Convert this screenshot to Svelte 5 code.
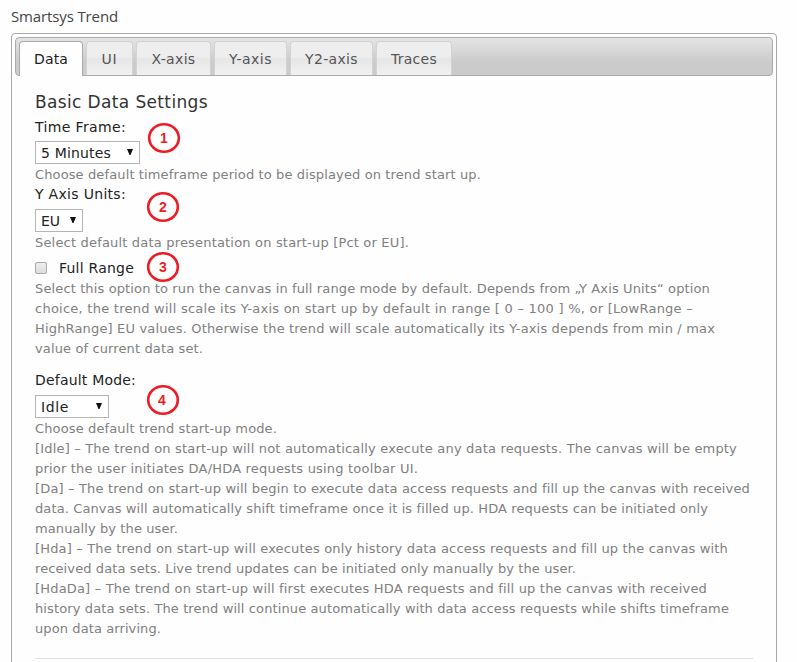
<script>
  const tabs = [
    { label: 'Data', width: 64, text: 34 },
    { label: 'UI', width: 47, text: 16 },
    { label: 'X-axis', width: 75, text: 44 },
    { label: 'Y-axis', width: 73, text: 43 },
    { label: 'Y2-axis', width: 83, text: 53 },
    { label: 'Traces', width: 76, text: 46 }
  ];
  const rangeHelp = [
    ['Select this option to run the canvas in full range mode by default. Depends from „Y Axis Units“ option', 675],
    ['choice, the trend will scale its Y-axis on start up by default in range [ 0 – 100 ] %, or [LowRange –', 658],
    ['HighRange] EU values. Otherwise the trend will scale automatically its Y-axis depends from min / max', 680],
    ['value of current data set.', 168]
  ];
  const modeHelp = [
    ['Choose default trend start-up mode.', 242],
    ['[Idle] – The trend on start-up will not automatically execute any data requests. The canvas will be empty', 702],
    ['prior the user initiates DA/HDA requests using toolbar UI.', 383],
    ['[Da] – The trend on start-up will begin to execute data access requests and fill up the canvas with received', 715],
    ['data. Canvas will automatically shift timeframe once it is filled up. HDA requests can be initiated only', 673],
    ['manually by the user.', 143],
    ['[Hda] – The trend on start-up will executes only history data access requests and fill up the canvas with', 693],
    ['received data sets. Live trend updates can be initiated only manually by the user.', 541],
    ['[HdaDa] – The trend on start-up will first executes HDA requests and fill up the canvas with received', 672],
    ['history data sets. The trend will continue automatically with data access requests while shifts timeframe', 694],
    ['upon data arriving.', 126]
  ];

  // Tracks a single line of text so that it fills the given width.
  function fit(node, width) {
    node.style.letterSpacing = '0';
    const natural = node.getBoundingClientRect().width;
    node.style.letterSpacing = `${(width - natural) / node.textContent.length}px`;
  }
</script>

{#snippet badge(n, x, y)}
  <svg class="badge" style:left="{x}px" style:top="{y}px" width="34" height="32" viewBox="0 0 34 32">
    <ellipse cx="17" cy="16" rx="14.8" ry="13.8" fill="#fff" stroke="#ed1c24" stroke-width="2.6" />
    <text x={n === 4 ? 16 : 17} y="21" text-anchor="middle">{n}</text>
  </svg>
{/snippet}

{#snippet select(label, width, text)}
  <button class="select" style:width="{width}px">
    <span use:fit={text}>{label}</span>
    <svg width="6" height="6" viewBox="0 0 6 6"><path d="M0 0h6L3.5 6h-1z" fill="#111" /></svg>
  </button>
{/snippet}

{#snippet help(lines)}
  <div class="help">
    {#each lines as [text, width]}
      <div><span use:fit={width}>{text}</span></div>
    {/each}
  </div>
{/snippet}

<main>
  <div class="title"><span use:fit={107}>Smartsys Trend</span></div>
  <section class="panel">
    <nav>
      {#each tabs as tab, i}
        <div class="tab" class:active={i === 0} style:width="{tab.width}px">
          <span use:fit={tab.text}>{tab.label}</span>
        </div>
      {/each}
    </nav>
    <div class="content">
      <h2><span use:fit={173}>Basic Data Settings</span></h2>
      <div class="label"><span use:fit={91}>Time Frame:</span></div>
      {@render select('5 Minutes', 105, 70)}
      {@render help([['Choose default timeframe period to be displayed on trend start up.', 446]])}
      <div class="label units"><span use:fit={91}>Y Axis Units:</span></div>
      {@render select('EU', 48, 19)}
      {@render help([['Select default data presentation on start-up [Pct or EU].', 374]])}
      <div class="check"><i></i><span use:fit={75}>Full Range</span></div>
      {@render help(rangeHelp)}
      <div class="label mode"><span use:fit={101}>Default Mode:</span></div>
      {@render select('Idle', 74, 28)}
      {@render help(modeHelp)}
      <hr />
    </div>
  </section>
  {@render badge(1, 147, 122)}
  {@render badge(2, 146, 191)}
  {@render badge(3, 146, 251)}
  {@render badge(4, 146, 384)}
</main>

<style>
  :global(body) { background: #fff; }
  main {
    position: relative;
    width: 797px;
    height: 662px;
    overflow: hidden;
    box-sizing: border-box;
    padding-left: 11px;
    background: #fefefe;
    font-family: Verdana, "DejaVu Sans", sans-serif;
    color: #222;
  }
  span { white-space: pre; }
  .title {
    height: 33px;
    line-height: 33px;
    font-family: "Open Sans", "Noto Sans", sans-serif;
    font-size: 15px;
    color: #444;
  }
  .panel {
    box-sizing: border-box;
    width: 766px;
    height: 660px;
    padding: 3px;
    border: 1px solid #a8a8a8;
    border-radius: 4px;
  }
  nav {
    box-sizing: border-box;
    display: flex;
    gap: 3px;
    width: 758px;
    height: 39px;
    padding: 3px 3px 0;
    border: 1px solid #aaa;
    border-radius: 4px;
    background: linear-gradient(#e4e4e4, #cbcbcb 65%, #cbcbcb);
  }
  .tab {
    box-sizing: border-box;
    flex: none;
    height: 34px;
    border: 1px solid #d3d3d3;
    border-bottom: 0;
    border-radius: 4px 4px 0 0;
    background: linear-gradient(#eee 0, #ededed 49%, #e6e6e6 50%, #f1f1f1);
    color: #555;
    font-size: 14px;
    line-height: 34px;
    text-align: center;
  }
  .tab.active {
    height: 35px;
    border-color: #aaa;
    background: #fefefe;
    color: #212121;
  }
  .content { padding: 14px 20px 0; }
  h2 {
    height: 26px;
    margin: 0;
    font-size: 17px;
    font-weight: 400;
    line-height: 24px;
    color: #333;
  }
  .label {
    height: 25px;
    font-size: 14px;
    line-height: 23px;
  }
  .units { height: 24px; line-height: 18px; }
  .mode { height: 36px; line-height: 43px; }
  .select {
    box-sizing: border-box;
    display: flex;
    justify-content: space-between;
    height: 23px;
    margin: 0;
    padding: 0 6px 0 5px;
    border: 1px solid #b5b5b5;
    border-radius: 0;
    background: #fff;
    color: #222;
    font: 14px/22px Verdana, "DejaVu Sans", sans-serif;
  }
  .select svg { margin-top: 7px; }
  .select + .help { padding-top: 1px; }
  .help {
    color: #808080;
    font-size: 13px;
    line-height: 20px;
  }
  .help div { height: 20px; }
  .check {
    box-sizing: border-box;
    display: flex;
    align-items: center;
    gap: 12px;
    height: 26px;
    padding-top: 3px;
    font-size: 14px;
    line-height: 20px;
  }
  .check i {
    box-sizing: border-box;
    width: 12px;
    height: 12px;
    border: 1px solid #a9a9a9;
    border-radius: 2px;
    background: linear-gradient(#eee, #ddd);
  }
  hr {
    width: 718px;
    height: 1px;
    margin: 19px 0 0;
    border: 0;
    background: #e0e0e0;
  }
  .badge { position: absolute; }
  .badge text {
    fill: #ed1c24;
    font: bold 14px "Liberation Sans", Arial, sans-serif;
  }
</style>
